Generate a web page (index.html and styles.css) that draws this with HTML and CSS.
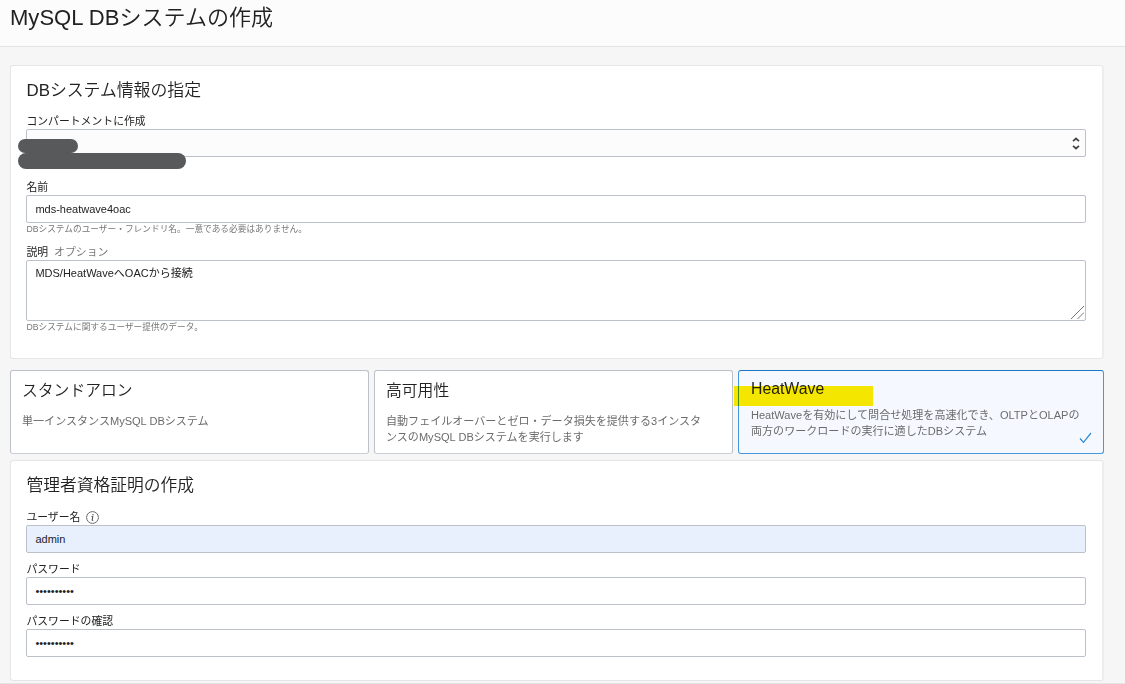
FILE: index.html
```html
<!DOCTYPE html>
<html lang="ja">
<head>
<meta charset="utf-8">
<title>MySQL DBシステムの作成</title>
<link rel="stylesheet" href="styles.css">
</head>
<body>
<header class="page-header"><h1>MySQL DBシステムの作成</h1></header>
<main class="content">
  <section class="panel panel-info">
    <h2>DBシステム情報の指定</h2>
    <div class="label">コンパートメントに作成</div>
    <div class="field select">
      <svg class="arrows" width="8" height="13" viewBox="0 0 8 13"><path d="M1 4.2 4 1.5 7 4.2M1 8.8 4 11.5 7 8.8"/></svg>
      <span class="redact redact-short"></span>
      <span class="redact redact-long"></span>
    </div>
    <div class="label label-name">名前</div>
    <div class="field">mds-heatwave4oac</div>
    <div class="hint">DBシステムのユーザー・フレンドリ名。一意である必要はありません。</div>
    <div class="label label-desc">説明 <span class="optional">オプション</span></div>
    <div class="field textarea">MDS/HeatWaveへOACから接続
      <svg class="grip" width="13" height="13" viewBox="0 0 13 13"><path d="M0 13 13 0M6.5 13 13 6.5"/></svg>
    </div>
    <div class="hint">DBシステムに関するユーザー提供のデータ。</div>
  </section>
  <section class="cards">
    <div class="card">
      <h3>スタンドアロン</h3>
      <p>単一インスタンスMySQL DBシステム</p>
    </div>
    <div class="card">
      <h3>高可用性</h3>
      <p>自動フェイルオーバーとゼロ・データ損失を提供する3インスタ<br>ンスのMySQL DBシステムを実行します</p>
    </div>
    <div class="card selected">
      <h3>HeatWave</h3>
      <p>HeatWaveを有効にして問合せ処理を高速化でき、OLTPとOLAPの<br>両方のワークロードの実行に適したDBシステム</p>
      <svg class="check" width="13" height="12" viewBox="0 0 13 12"><path d="M1 6.5 4.5 10.3 12 1"/></svg>
      <span class="marker"></span>
    </div>
  </section>
  <section class="panel panel-admin">
    <h2>管理者資格証明の作成</h2>
    <div class="label"><span>ユーザー名</span><svg class="info" width="13" height="13" viewBox="0 0 13 13"><circle cx="6.5" cy="6.5" r="5.9"/><path class="info-i" d="M5.5 5.6h1.4L6 9.3h1.2M7 3v1.4"/></svg></div>
    <div class="field filled">admin</div>
    <div class="label label-pw">パスワード</div>
    <div class="field password">••••••••••</div>
    <div class="label label-pw">パスワードの確認</div>
    <div class="field password">••••••••••</div>
  </section>
</main>
<footer class="page-footer"></footer>
</body>
</html>
```
FILE: styles.css
```css
* { box-sizing: border-box; }
body {
  margin: 0;
  height: 684px;
  overflow: hidden;
  display: flex;
  flex-direction: column;
  background: #f6f6f6;
  color: #222;
  font: 400 11px/16px "Liberation Sans", "Noto Sans CJK JP", sans-serif;
}
h1, h2, h3, p { margin: 0; font-weight: 350; white-space: nowrap; }
.page-header {
  height: 47px;
  flex: none;
  padding: 3px 10px 0;
  background: #fcfcfc;
  border-bottom: 1px solid #e4e4e4;
}
h1 { font-size: 22.05px; line-height: 30px; }
.content {
  flex: none;
  height: 636px;
  padding: 18px 21px 0 10px;
  display: flex;
  flex-direction: column;
}
.panel {
  flex: none;
  background: #fff;
  border: 1px solid #e5e6e8;
  border-right: 2px solid #ededef;
  border-radius: 3px;
  padding: 13px 15px 0 15px;
}
.panel-info { height: 294px; }
.panel-admin { height: 221px; margin-top: 6px; }
h2 { padding-left: 0.5px; font-size: 16.85px; line-height: 24px; margin-bottom: 10px; }
.panel-admin h2 { margin-bottom: 11px; font-size: 16.75px; }
.label {
  display: flex;
  align-items: center;
  height: 16px;
  padding-left: 0.4px;
  font-size: 10.85px;
  white-space: pre;
}
.label-name { margin-top: 22px; }
.label-desc { margin-top: 8px; }
.label-pw { margin-top: 8px; }
.optional { color: #777; margin-left: 3px; }
.field {
  position: relative;
  height: 28px;
  margin-right: 1px;
  padding: 0 8.4px;
  border: 1px solid #bcc1c9;
  border-radius: 2px;
  line-height: 27px;
  background: #fff;
}
.select {
  display: flex;
  align-items: center;
  justify-content: flex-end;
  padding-right: 5px;
  background: #fcfcfc;
}
.arrows, .grip, .check, .info { fill: none; }
.arrows { stroke: #444; stroke-width: 1.7; }
.redact { position: absolute; left: -9px; background: #58595b; }
.redact-short { top: 9px; width: 60px; height: 14px; border-radius: 7px; }
.redact-long { top: 23px; width: 168px; height: 16px; border-radius: 8px; }
.textarea { height: 61px; line-height: 24px; }
.grip { position: absolute; right: 1px; bottom: 1px; stroke: #777; }
.hint { height: 13px; padding-left: 0.4px; line-height: 12px; font-size: 8.7px; color: #777; }
.cards { flex: none; display: flex; gap: 5px; margin-top: 11px; height: 84px; }
.card {
  position: relative;
  width: 359px;
  flex: none;
  padding: 9px 12px 0 11px;
  background: #fff;
  border: 1px solid #bcc1c9;
  border-bottom-color: #cbd0d6;
  border-radius: 3px;
}
h3 { font-size: 15.8px; line-height: 22px; }
.card p { margin-top: 11px; color: #6b6b6b; font-size: 11.05px; font-weight: 400; }
.selected {
  width: 366px;
  padding: 7px 12px 0;
  background: #f5f9ff;
  border-color: #4797dc;
  border-top-color: #1976c8;
}
.selected p { margin-top: 7px; }
.check { position: absolute; right: 11px; bottom: 9px; stroke: #2b87d8; stroke-width: 1.2; }
.marker {
  position: absolute;
  left: -5px;
  top: 15px;
  width: 139px;
  height: 20px;
  background: #ffec00;
  mix-blend-mode: multiply;
}
.info { margin-left: 6px; stroke: #6a6a6a; }
.info-i { stroke: #444; }
.filled { background: #e8f0fe; }
.page-footer { flex: none; height: 1px; background: #e4e4e4; }
```
